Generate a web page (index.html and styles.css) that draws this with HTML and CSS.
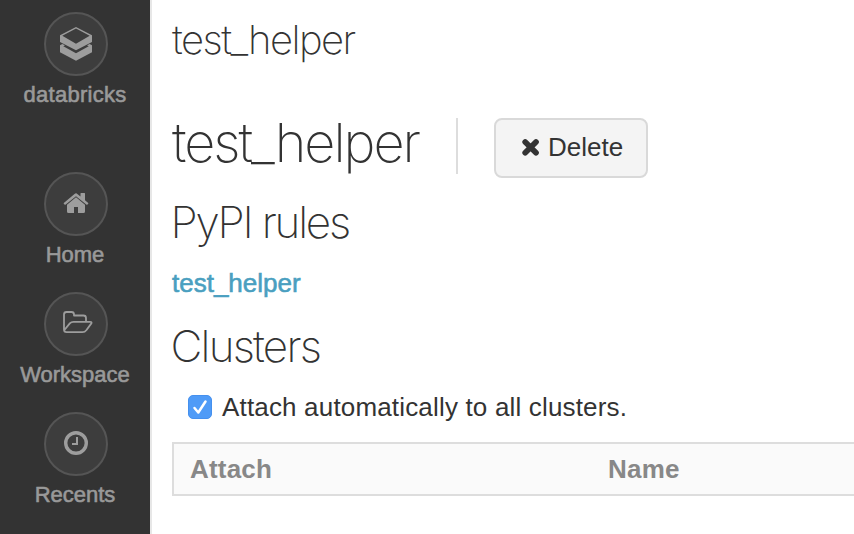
FILE: index.html
```html
<!DOCTYPE html>
<html lang="en">
<head>
<meta charset="utf-8">
<title>test_helper</title>
<link rel="stylesheet" href="styles.css">
</head>
<body>
<nav class="sidebar">
  <a class="item brand">
    <span class="disc"><svg width="60" height="60" viewBox="0 0 60 60" fill="#9d9d9d"><path fill-rule="evenodd" d="M30 13 46 21.300V28L30 36.300 14 28V21.300ZM30 14.600 16.300 21.700 30 29.700 43.700 21.700Z"/><path d="M14 31.200 16.300 29.900 19 31.300 17.300 32.300 30 39.200 42.700 32.300 41 31.300 43.700 29.900 46 31.200V38.200L30 46.800 14 38.200Z"/></svg></span>
    <span class="label l-db">databricks</span>
  </a>
  <a class="item">
    <span class="disc"><svg width="60" height="60" viewBox="0 0 60 60"><path fill="#9d9d9d" d="M30 23.2 39 30.7V37.5Q39 39 37.5 39H32V33H28V39H22.500Q21 39 21 37.500V30.700ZM30 19 34.500 22.500V19.500Q34.500 19 35 19H38.500Q39 19 39 19.500V26.300L42.500 29.200 41.300 30.800 40.600 30.800 30 22.200 19.400 30.800 18.700 30.800 17.500 29.200 28.500 19.900Q30 18.600 31.500 19.900Z"/></svg></span>
    <span class="label">Home</span>
  </a>
  <a class="item">
    <span class="disc"><svg width="60" height="60" viewBox="0 0 60 60" fill="none" stroke="#9d9d9d" stroke-width="1.8" stroke-linejoin="round"><path d="M18 35.500V20.500Q18 18 20.500 18H25.500Q28 18 28 20.500V21.500H37.500Q40 21.500 40 24V27.800M18 36.500 23.800 29.400Q25.200 27.800 27.500 27.800H44Q46.600 27.800 45 29.900L40.500 36Q38.800 38.200 36.500 38.200H20.500Q18 38.200 18 35.500"/></svg></span>
    <span class="label">Workspace</span>
  </a>
  <a class="item">
    <span class="disc"><svg width="60" height="60" viewBox="0 0 60 60" fill="none" stroke="#9d9d9d"><circle cx="30" cy="29" r="10.300" stroke-width="3.400"/><path stroke-width="2" d="M31 23V30H26"/></svg></span>
    <span class="label">Recents</span>
  </a>
</nav>
<main class="main">
  <div class="crumb"><span>test_helper</span></div>
  <header class="head">
    <h1 class="title">test_helper</h1>
    <button class="delete"><svg width="18" height="18" viewBox="0 0 18 18"><path d="M3.200 4 14 14.800M14 4 3.200 14.800" stroke="#333" stroke-width="5.700" stroke-linecap="round"/></svg><span>Delete</span></button>
  </header>
  <h2 class="section s-rules">PyPI rules</h2>
  <a class="link">test_helper</a>
  <h2 class="section s-clusters">Clusters</h2>
  <label class="check"><svg width="24" height="24" viewBox="0 0 24 24"><rect x=".5" y=".5" width="23" height="23" rx="4.500" fill="#4f9bf7" stroke="#4590ee"/><path d="M6.500 13 10.300 17.500 17.500 6.500" fill="none" stroke="#fff" stroke-width="2.500" stroke-linecap="round" stroke-linejoin="round"/></svg><span>Attach automatically to all clusters.</span></label>
  <div class="thead"><span class="th-attach">Attach</span><span class="th-name">Name</span></div>
</main>
</body>
</html>
```
FILE: styles.css
```css
* { box-sizing: border-box; }
body {
  margin: 0;
  height: 534px;
  overflow: hidden;
  display: flex;
  background: #fff;
  color: #333;
  font: 26px/40px "Liberation Sans", sans-serif;
}
.sidebar {
  flex: none;
  width: 152px;
  padding-top: 12px;
  background: #333;
  border-right: 2px solid #e7e7e7;
}
.item {
  display: flex;
  flex-direction: column;
  align-items: center;
  height: 120px;
}
.brand { height: 160px; }
.disc {
  width: 64px;
  height: 64px;
  margin-left: 2px;
  border: 2px solid #555;
  border-radius: 50%;
  background: #3d3d3d;
}
.disc svg { display: block; }
.label {
  font-size: 22px;
  line-height: 38px;
  color: #999;
  -webkit-text-stroke: .6px #999;
}
.l-db { letter-spacing: .25px; }
.main {
  flex: 1;
  min-width: 0;
  padding: 16px 0 0 20px;
}
.crumb, .title, .section {
  margin: 0;
  font-family: Inter, sans-serif;
  font-weight: 200;
  white-space: nowrap;
}
.crumb { font-size: 40px; line-height: 48px; letter-spacing: -1.5px; }
.head {
  display: flex;
  align-items: flex-start;
  height: 60px;
  margin-top: 54px;
}
.title {
  width: 286px;
  height: 56px;
  font-size: 54px;
  line-height: 50px;
  letter-spacing: -2px;
  border-right: 2px solid #ddd;
}
.delete {
  display: flex;
  align-items: center;
  gap: 8px;
  width: 154px;
  height: 60px;
  margin-left: 36px;
  padding: 0 0 2px 26px;
  border: 2px solid #d9d9d9;
  border-radius: 8px;
  background: #f4f4f4;
  color: #333;
  font: 26px/40px "Liberation Sans", sans-serif;
}
.section { font-size: 44px; line-height: 50px; text-indent: -1.5px; }
.s-rules { margin-top: 19px; letter-spacing: -2.2px; }
.s-clusters { margin-top: 18px; letter-spacing: -1.8px; }
.link {
  display: block;
  margin-top: 16px;
  color: #4a9fc0;
  -webkit-text-stroke: .6px #4a9fc0;
}
.check {
  display: flex;
  align-items: center;
  gap: 10px;
  margin: 16px 0 15px 16px;
  letter-spacing: .17px;
}
.thead {
  display: flex;
  height: 54px;
  padding-left: 16px;
  border: 2px solid #ddd;
  border-right: 0;
  background: #fafafa;
  color: #888;
  font-weight: bold;
  line-height: 50px;
  letter-spacing: .2px;
}
.th-attach { width: 418px; }
```
